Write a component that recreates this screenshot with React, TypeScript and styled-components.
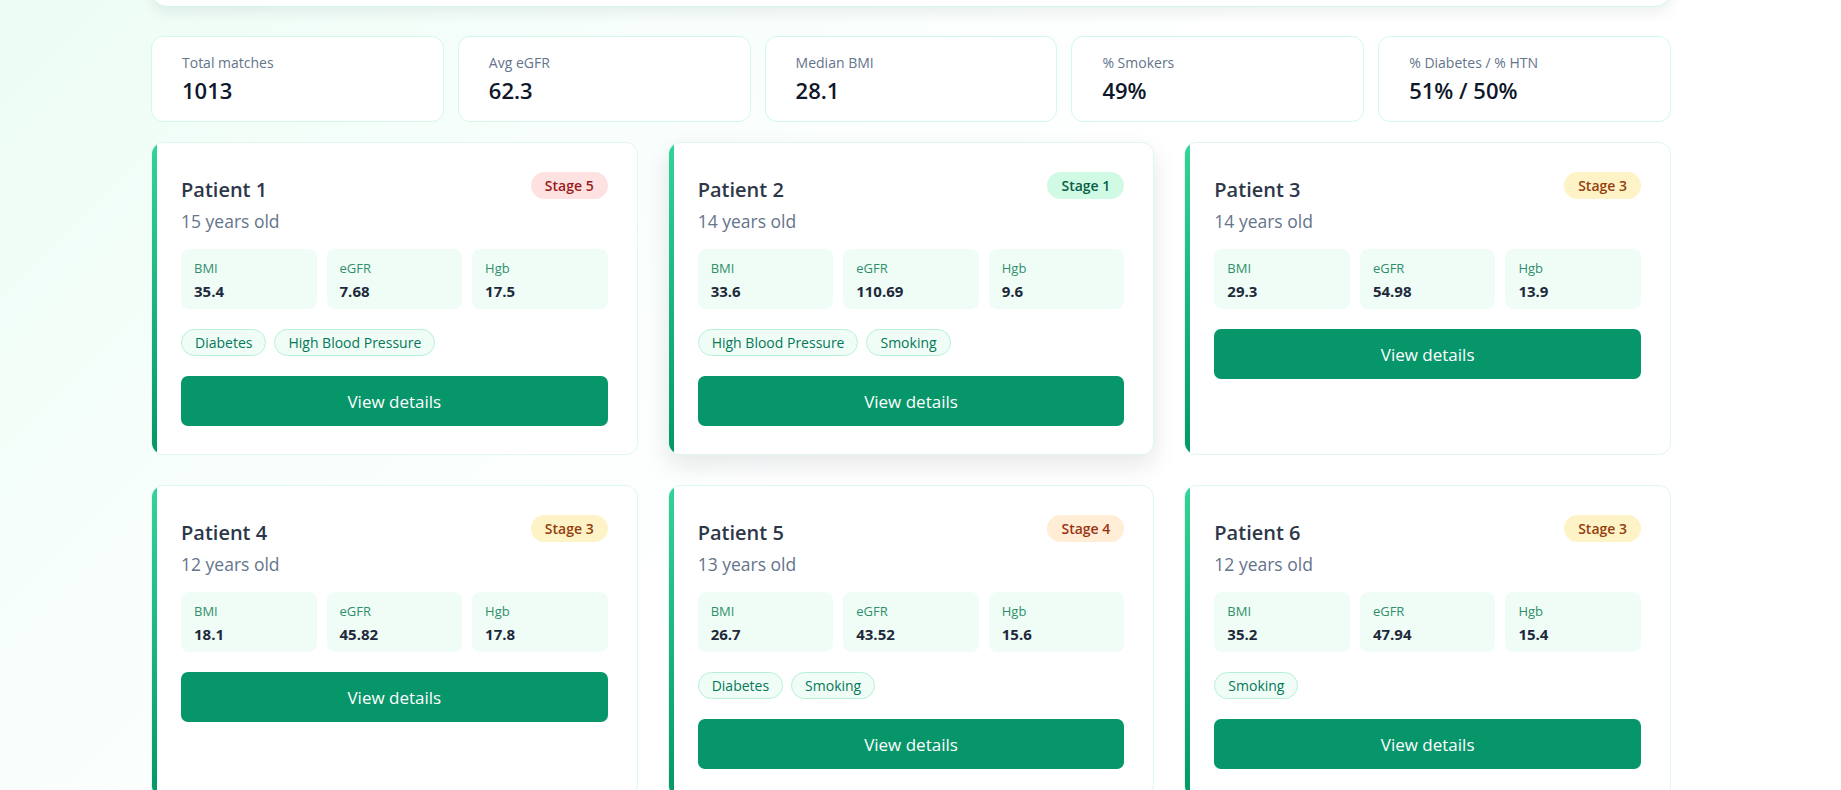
import React from "react";
import styled, { createGlobalStyle, css } from "styled-components";

const GlobalStyle = createGlobalStyle`
  * { box-sizing: border-box; }
  html, body {
    margin: 0;
    padding: 0;
  }
  body {
    font-family: "Open Sans", "Noto Sans", Arial, sans-serif;
    background: linear-gradient(135deg, #ecfdf5 0%, #f7fefb 25%, #ffffff 50%);
    min-height: 100vh;
    overflow: hidden;
  }
`;

const Page = styled.div`
  width: 1520px;
  margin: -113px 0 0 151px;
  display: flex;
  flex-direction: column;
`;

const FilterPanel = styled.div`
  height: 120px;
  background: #ffffff;
  border: 1px solid #d1fae5;
  border-radius: 16px;
  box-shadow: 0 6px 14px rgba(15, 23, 42, 0.07);
`;

const StatsRow = styled.div`
  display: grid;
  grid-template-columns: repeat(5, 1fr);
  gap: 14px;
  margin-top: 29px;
`;

const StatCard = styled.div`
  background: #ffffff;
  border: 1px solid #d1fae5;
  border-radius: 12px;
  height: 86px;
  padding: 16px 30px 0;
  display: flex;
  flex-direction: column;
`;

const StatLabel = styled.div`
  font-size: 14px;
  line-height: 20px;
  color: #64748b;
`;

const StatValue = styled.div`
  font-size: 22px;
  line-height: 32px;
  font-weight: 600;
  color: #0f172a;
  margin-top: 1px;
`;

const CardGrid = styled.div`
  display: grid;
  grid-template-columns: repeat(3, 1fr);
  gap: 30px;
  margin-top: 20px;
`;

const Card = styled.div<{ $elevated?: boolean }>`
  position: relative;
  overflow: hidden;
  background: #ffffff;
  border: 1px solid #e0f7ee;
  border-radius: 12px;
  padding: 29px 29px 28px;
  display: flex;
  flex-direction: column;
  ${(p) =>
    p.$elevated &&
    css`
      box-shadow: 0 10px 24px rgba(15, 23, 42, 0.1);
    `}
  &::before {
    content: "";
    position: absolute;
    left: 0;
    top: 0;
    bottom: 0;
    width: 5px;
    background: linear-gradient(180deg, #34d399 0%, #059669 100%);
  }
`;

const CardHeader = styled.div`
  display: flex;
  justify-content: space-between;
  align-items: flex-start;
`;

const NameBlock = styled.div`
  display: flex;
  flex-direction: column;
`;

const Name = styled.div`
  font-size: 20px;
  line-height: 28px;
  font-weight: 600;
  color: #2d3748;
  margin-top: 4px;
`;

const Age = styled.div`
  font-size: 17.5px;
  line-height: 26px;
  color: #64748b;
  margin-top: 4px;
`;

const stageColors: Record<number, { bg: string; fg: string }> = {
  1: { bg: "#d1fae5", fg: "#065f46" },
  3: { bg: "#fef3c7", fg: "#92400e" },
  4: { bg: "#ffedd5", fg: "#9a3412" },
  5: { bg: "#fee2e2", fg: "#991b1b" },
};

const Badge = styled.span<{ $stage: number }>`
  display: inline-flex;
  align-items: center;
  height: 27px;
  padding: 0 14px;
  border-radius: 999px;
  font-size: 14px;
  font-weight: 600;
  background: ${(p) => stageColors[p.$stage].bg};
  color: ${(p) => stageColors[p.$stage].fg};
`;

const Metrics = styled.div`
  display: grid;
  grid-template-columns: repeat(3, 1fr);
  gap: 10px;
  margin-top: 15px;
`;

const Metric = styled.div`
  background: #f0fdf7;
  border-radius: 8px;
  height: 60px;
  padding: 9px 13px;
  display: flex;
  flex-direction: column;
`;

const MetricLabel = styled.div`
  font-size: 13px;
  line-height: 20px;
  color: #2f8f6b;
`;

const MetricValue = styled.div`
  font-size: 15px;
  line-height: 22px;
  font-weight: 700;
  color: #1e293b;
  margin-top: 2px;
`;

const Tags = styled.div`
  display: flex;
  gap: 8px;
  margin-top: 20px;
`;

const Tag = styled.span`
  display: inline-flex;
  align-items: center;
  height: 27px;
  padding: 0 13px;
  border-radius: 999px;
  border: 1px solid #b7f0d6;
  background: #f0fdf7;
  color: #047857;
  font-size: 14px;
`;

const Button = styled.button`
  margin-top: 20px;
  height: 50px;
  width: 100%;
  border: none;
  border-radius: 7px;
  background: #07966a;
  color: #ffffff;
  font-family: inherit;
  font-size: 17px;
  cursor: pointer;
`;

type Patient = {
  id: number;
  age: number;
  stage: number;
  bmi: string;
  egfr: string;
  hgb: string;
  tags: string[];
};

const patients: Patient[] = [
  { id: 1, age: 15, stage: 5, bmi: "35.4", egfr: "7.68", hgb: "17.5", tags: ["Diabetes", "High Blood Pressure"] },
  { id: 2, age: 14, stage: 1, bmi: "33.6", egfr: "110.69", hgb: "9.6", tags: ["High Blood Pressure", "Smoking"] },
  { id: 3, age: 14, stage: 3, bmi: "29.3", egfr: "54.98", hgb: "13.9", tags: [] },
  { id: 4, age: 12, stage: 3, bmi: "18.1", egfr: "45.82", hgb: "17.8", tags: [] },
  { id: 5, age: 13, stage: 4, bmi: "26.7", egfr: "43.52", hgb: "15.6", tags: ["Diabetes", "Smoking"] },
  { id: 6, age: 12, stage: 3, bmi: "35.2", egfr: "47.94", hgb: "15.4", tags: ["Smoking"] },
];

const stats = [
  { label: "Total matches", value: "1013" },
  { label: "Avg eGFR", value: "62.3" },
  { label: "Median BMI", value: "28.1" },
  { label: "% Smokers", value: "49%" },
  { label: "% Diabetes / % HTN", value: "51% / 50%" },
];

export default function App() {
  return (
    <>
      <GlobalStyle />
      <Page>
        <FilterPanel />
        <StatsRow>
          {stats.map((s) => (
            <StatCard key={s.label}>
              <StatLabel>{s.label}</StatLabel>
              <StatValue>{s.value}</StatValue>
            </StatCard>
          ))}
        </StatsRow>
        <CardGrid>
          {patients.map((p) => (
            <Card key={p.id} $elevated={p.id === 2}>
              <CardHeader>
                <NameBlock>
                  <Name>Patient {p.id}</Name>
                  <Age>{p.age} years old</Age>
                </NameBlock>
                <Badge $stage={p.stage}>Stage {p.stage}</Badge>
              </CardHeader>
              <Metrics>
                <Metric>
                  <MetricLabel>BMI</MetricLabel>
                  <MetricValue>{p.bmi}</MetricValue>
                </Metric>
                <Metric>
                  <MetricLabel>eGFR</MetricLabel>
                  <MetricValue>{p.egfr}</MetricValue>
                </Metric>
                <Metric>
                  <MetricLabel>Hgb</MetricLabel>
                  <MetricValue>{p.hgb}</MetricValue>
                </Metric>
              </Metrics>
              {p.tags.length > 0 && (
                <Tags>
                  {p.tags.map((t) => (
                    <Tag key={t}>{t}</Tag>
                  ))}
                </Tags>
              )}
              <Button>View details</Button>
            </Card>
          ))}
        </CardGrid>
      </Page>
    </>
  );
}
